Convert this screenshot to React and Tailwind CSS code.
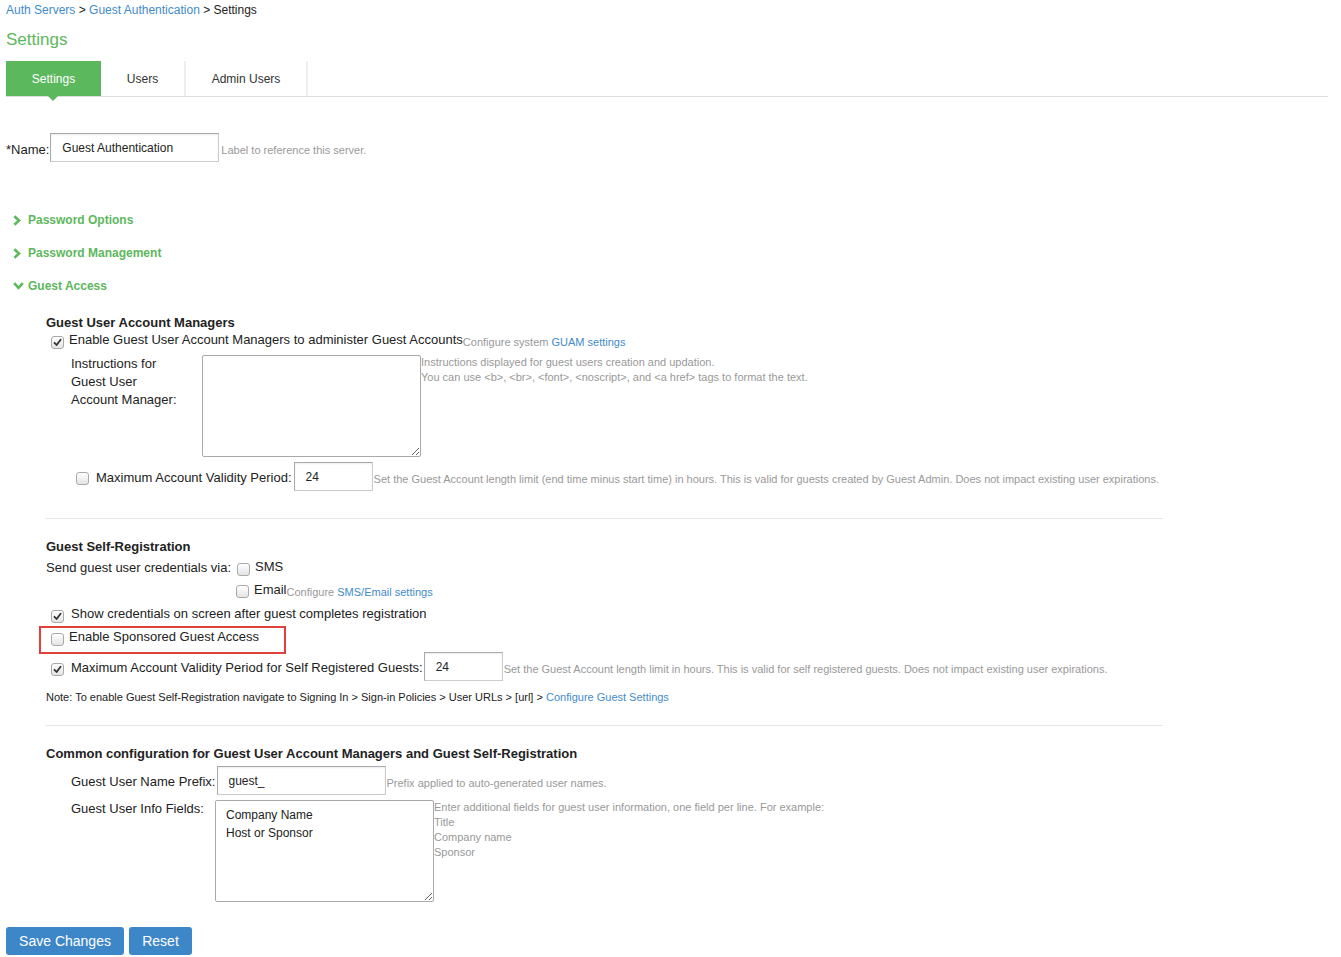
import React from 'react';

const GREEN = 'text-[#5cb85c]';

// Check box drawn like the old gray Windows style
const Check = ({ checked = false, className = '' }) => (
  <span
    className={`inline-flex shrink-0 w-[13px] h-[13px] items-center justify-center rounded-[3px] border border-[#a9a9a9] bg-gradient-to-b from-white to-[#e4e4e4] ${className}`}
  >
    {checked && (
      <svg width="9" height="9" viewBox="0 0 9 9">
        <path d="M1.5 4.8 L3.6 7 L7.6 1.8" fill="none" stroke="#333" strokeWidth="1.8" strokeLinecap="round" strokeLinejoin="round" />
      </svg>
    )}
  </span>
);

const Hint = ({ children, className = '' }) => (
  <span className={`text-[11px] leading-[15px] text-[#999] whitespace-nowrap ${className}`}>{children}</span>
);

const Toggle = ({ open = false, label }) => (
  <div className="flex items-center h-[16px] pl-[7px]">
    <span className="w-[15px] flex items-center">
      {open ? (
        <svg width="11" height="8" viewBox="0 0 11 8">
          <path d="M1.2 1.2 L5.5 5.8 L9.8 1.2" fill="none" stroke="#5cb85c" strokeWidth="2.6" />
        </svg>
      ) : (
        <svg width="8" height="11" viewBox="0 0 8 11">
          <path d="M1.4 1.2 L6 5.5 L1.4 9.8" fill="none" stroke="#5cb85c" strokeWidth="2.6" />
        </svg>
      )}
    </span>
    <span className={`text-[12px] font-bold ${GREEN}`}>{label}</span>
  </div>
);

const inputCls =
  'h-[29px] border border-[#ccc] border-t-[#aaa] border-l-[#aaa] shadow-[inset_0_1px_2px_rgba(0,0,0,0.08)] px-[11px] text-[12px] text-[#222] outline-none bg-white';

const taCls =
  'border border-[#aaa] rounded-[2px] px-[10px] py-[5px] text-[12px] leading-[18px] text-[#222] outline-none bg-white';

export default function App() {
  return (
    <div className="w-[1341px] min-h-[957px] bg-white px-[6px] pt-[3px] font-['Liberation_Sans',Arial,sans-serif] text-[#222] text-[13px]">
      {/* breadcrumb */}
      <div className="text-[12px] leading-[14px]">
        <span className="text-[#428bca]">Auth Servers</span>
        <span> &gt; </span>
        <span className="text-[#428bca]">Guest Authentication</span>
        <span> &gt; </span>
        <span>Settings</span>
      </div>

      <div className={`mt-[13px] text-[17px] leading-[20px] ${GREEN}`}>Settings</div>

      {/* tabs */}
      <div className="mt-[11px] w-[1322px] flex h-[36px] border-b border-[#ddd]">
        <div className="relative w-[95px] h-[35px] bg-[#5cb85c] text-white text-[12px] flex items-center justify-center">
          Settings
          <span className="absolute left-[42px] top-[35px] w-0 h-0 border-l-[5px] border-r-[5px] border-t-[5px] border-l-transparent border-r-transparent border-t-[#5cb85c]" />
        </div>
        <div className="w-[85px] h-[35px] border-r-2 border-[#eee] text-[12px] text-[#333] flex items-center justify-center">Users</div>
        <div className="w-[122px] h-[35px] border-r-2 border-[#eee] text-[12px] text-[#333] flex items-center justify-center">Admin Users</div>
      </div>

      {/* name */}
      <div className="mt-[36px] flex items-center h-[29px]">
        <span className="text-[13px] mt-[4px]">*Name:</span>
        <input className={`${inputCls} w-[169px] ml-[1px]`} defaultValue="Guest Authentication" />
        <Hint className="ml-[2px] mt-[5px]">Label to reference this server.</Hint>
      </div>

      {/* toggles */}
      <div className="mt-[50px] flex flex-col gap-[17px]">
        <Toggle label="Password Options" />
        <Toggle label="Password Management" />
        <Toggle open label="Guest Access" />
      </div>

      <div className="pl-[40px]">
        {/* Guest User Account Managers */}
        <div className="mt-[21px] text-[13px] font-bold leading-[16px]">Guest User Account Managers</div>
        <div className="flex items-center h-[18px] pl-[5px]">
          <Check checked className="mt-[5px]" />
          <span className="ml-[5px]">Enable Guest User Account Managers to administer Guest Accounts</span>
          <Hint className="mt-[5px]">
            Configure system <span className="text-[#428bca]">GUAM settings</span>
          </Hint>
        </div>

        <div className="mt-[6px] flex">
          <div className="w-[156px] pl-[25px] leading-[18px] whitespace-nowrap">
            Instructions for
            <br />
            Guest User
            <br />
            Account Manager:
          </div>
          <textarea className={`${taCls} w-[219px] h-[102px]`} />
          <div className="flex flex-col">
            <Hint>Instructions displayed for guest users creation and updation.</Hint>
            <Hint>You can use &lt;b&gt;, &lt;br&gt;, &lt;font&gt;, &lt;noscript&gt;, and &lt;a href&gt; tags to format the text.</Hint>
          </div>
        </div>

        <div className="mt-[5px] flex items-center h-[29px] pl-[30px]">
          <Check className="mt-[4px]" />
          <span className="ml-[7px] mt-[3px]">Maximum Account Validity Period:</span>
          <input className={`${inputCls} w-[79px] ml-[2px]`} defaultValue="24" />
          <Hint className="ml-[1px] mt-[5px]">
            Set the Guest Account length limit (end time minus start time) in hours. This is valid for guests created by Guest Admin. Does not impact existing user expirations.
          </Hint>
        </div>

        <div className="mt-[27px] w-[1117px] border-t border-[#e5e5e5]" />

        {/* Guest Self-Registration */}
        <div className="mt-[20px] text-[13px] font-bold leading-[16px]">Guest Self-Registration</div>
        <div className="mt-[4px] flex items-center h-[18px]">
          <span>Send guest user credentials via:</span>
          <Check className="ml-[6px] mt-[2px]" />
          <span className="ml-[5px] -mt-[3px]">SMS</span>
        </div>
        <div className="mt-[4px] flex items-center h-[18px] pl-[190px]">
          <Check className="mt-[3px]" />
          <span className="ml-[5px] -mt-[1px]">Email</span>
          <Hint className="mt-[4px]">
            Configure <span className="text-[#428bca]">SMS/Email settings</span>
          </Hint>
        </div>
        <div className="mt-[6px] flex items-center h-[18px] pl-[5px]">
          <Check checked className="mt-[4px]" />
          <span className="ml-[7px]">Show credentials on screen after guest completes registration</span>
        </div>
        <div className="relative mt-[5px] flex items-center h-[18px] pl-[5px]">
          <span className="absolute -left-[7px] -top-[2px] w-[247px] h-[28px] border-2 border-[#e0413a]" />
          <Check className="mt-[4px]" />
          <span className="ml-[5px]">Enable Sponsored Guest Access</span>
        </div>
        <div className="mt-[6px] flex items-center h-[29px] pl-[5px]">
          <Check checked className="mt-[6px]" />
          <span className="ml-[7px] mt-[3px]">Maximum Account Validity Period for Self Registered Guests:</span>
          <input className={`${inputCls} w-[79px] ml-[1px]`} defaultValue="24" />
          <Hint className="ml-[1px] mt-[5px]">
            Set the Guest Account length limit in hours. This is valid for self registered guests. Does not impact existing user expirations.
          </Hint>
        </div>
        <div className="mt-[9px] text-[11px] leading-[14px] text-[#222]">
          Note: To enable Guest Self-Registration navigate to Signing In &gt; Sign-in Policies &gt; User URLs &gt; [url] &gt;{' '}
          <span className="text-[#428bca]">Configure Guest Settings</span>
        </div>

        <div className="mt-[21px] w-[1117px] border-t border-[#e5e5e5]" />

        {/* Common */}
        <div className="mt-[20px] text-[13px] font-bold leading-[16px]">
          Common configuration for Guest User Account Managers and Guest Self-Registration
        </div>
        <div className="mt-[4px] flex items-center h-[29px] pl-[25px]">
          <span className="mt-[2px]">Guest User Name Prefix:</span>
          <input className={`${inputCls} w-[169px] ml-[1px]`} defaultValue="guest_" />
          <Hint className="ml-[1px] mt-[5px]">Prefix applied to auto-generated user names.</Hint>
        </div>
        <div className="mt-[5px] flex">
          <div className="w-[169px] pl-[25px] leading-[18px]">Guest User Info Fields:</div>
          <textarea
            className={`${taCls} w-[219px] h-[102px] py-[5px]`}
            defaultValue={'Company Name\nHost or Sponsor'}
          />
          <div className="flex flex-col">
            <Hint>Enter additional fields for guest user information, one field per line. For example:</Hint>
            <Hint>Title</Hint>
            <Hint>Company name</Hint>
            <Hint>Sponsor</Hint>
          </div>
        </div>
      </div>

      {/* buttons */}
      <div className="mt-[25px] flex gap-[5px]">
        <button className="h-[28px] w-[118px] rounded-[3px] bg-[#3d87c8] text-white text-[14px]">Save Changes</button>
        <button className="h-[28px] w-[63px] rounded-[3px] bg-[#3d87c8] text-white text-[14px]">Reset</button>
      </div>
    </div>
  );
}
